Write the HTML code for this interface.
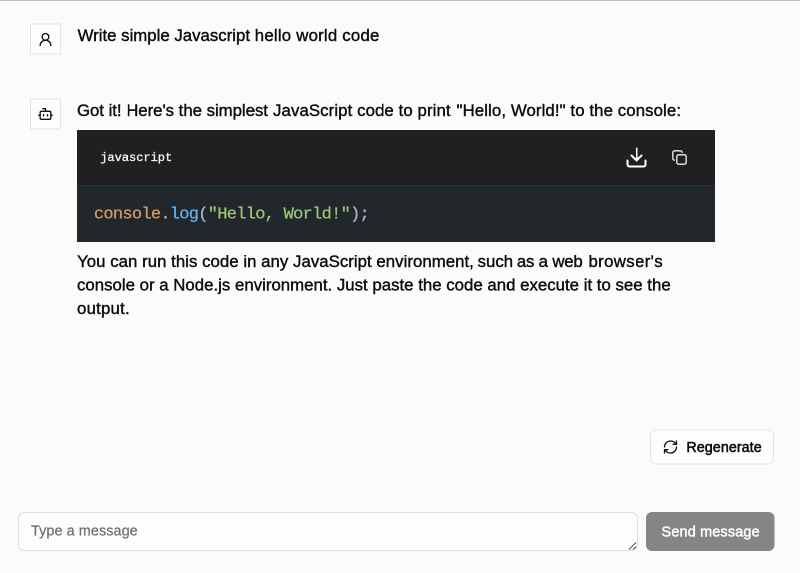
<!DOCTYPE html>
<html><head><meta charset="utf-8">
<style>
*{box-sizing:border-box;margin:0;padding:0}
html,body{width:800px;height:573px;overflow:hidden;background:#fbfbfb}
#w{position:absolute;left:0;top:0;width:1600px;height:1146px;transform:scale(.5);transform-origin:0 0;will-change:transform;background:#fbfbfb;overflow:hidden}
#z{position:absolute;left:0;top:0;width:800px;height:573px;zoom:2;font-family:"Liberation Sans",sans-serif;color:#111}
.topline{position:absolute;left:0;top:0;width:800px;height:1px;background:#c3c3c6}
.av{position:absolute;left:30px;width:31px;height:31px;border:1px solid #e3e3e6;background:#fdfdfd}
svg{position:absolute;overflow:visible;fill:none;stroke-linecap:round;stroke-linejoin:round;stroke-width:2}
.t{position:absolute;left:0;font-size:16.8px;line-height:24px;white-space:nowrap;color:#0c0c0c;-webkit-text-stroke:0.4px #0c0c0c}
.t span{position:absolute;top:0}
.code{position:absolute;left:77px;top:130px;width:638px;height:112px;background:#22272c}
.code .hd{position:absolute;left:0;top:0;width:638px;height:55px;background:#202022}
.code .sep{position:absolute;left:0;top:55px;width:638px;height:0.5px;background:#33383d}
.lang{position:absolute;left:23.2px;top:21px;font-family:"Liberation Mono",monospace;font-size:12px;line-height:14px;color:#f4f4f5;-webkit-text-stroke:0.3px #f4f4f5;white-space:pre}
.src{position:absolute;left:16.9px;top:73px;font-family:"Liberation Mono",monospace;font-size:17px;letter-spacing:-0.715px;line-height:22px;white-space:pre;-webkit-text-stroke:0.3px;text-shadow:0 1px rgba(0,0,0,.3)}
.regen{position:absolute;left:650px;top:429.5px;width:124px;height:35px;border:1px solid #e3e3e6;border-radius:6px;background:#fdfdfd}
.regen span{position:absolute;left:35.4px;top:7.5px;font-size:14.3px;letter-spacing:0.06px;line-height:18px;color:#0c0c0c;-webkit-text-stroke:0.55px #0c0c0c;white-space:nowrap}
.ta{position:absolute;left:18px;top:512px;width:620px;height:39px;border:1px solid #e0e0e3;border-radius:6px;background:#fdfdfd}
.ta span{position:absolute;left:12px;top:7.5px;font-size:14.4px;letter-spacing:0.08px;line-height:20px;color:#6c6c71;-webkit-text-stroke:0.2px #6c6c71;white-space:nowrap}
.send{position:absolute;left:645.75px;top:512px;width:128.5px;height:39px;border-radius:6px;background:#858587}
.send span{position:absolute;left:15.8px;top:9.5px;font-size:14.4px;letter-spacing:0.18px;line-height:20px;color:#fafafa;-webkit-text-stroke:0.55px #fafafa;white-space:nowrap}
</style></head><body>
<div id="w"><div id="z">
<div class="topline"></div>
<div class="av" style="top:23.5px"></div>
<svg style="left:37.3px;top:31.4px;stroke:#111" width="16" height="16" viewBox="0 0 24 24"><circle cx="12" cy="8" r="5"/><path d="M20 21a8 8 0 0 0-16 0"/></svg>
<div class="t" id="u" style="top:23.5px"><span style="left:77.59px;letter-spacing:0.008px">Write simple Javascript</span><span style="left:254.8px;letter-spacing:0.216px">hello world code</span></div>
<div class="av" style="top:98.5px"></div>
<svg style="left:37.3px;top:106.2px;stroke:#111" width="16" height="16" viewBox="0 0 24 24"><path d="M12 8V4H8"/><rect width="16" height="12" x="4" y="8" rx="2"/><path d="M2 14h2"/><path d="M20 14h2"/><path d="M15 13v2"/><path d="M9 13v2"/></svg>
<div class="t" id="b" style="top:98.5px"><span style="left:76.95px;letter-spacing:-0.025px">Got it! Here's the simplest</span><span style="left:273.06px;letter-spacing:0.09px">JavaScript code to print</span><span style="left:456.53px;letter-spacing:0.096px">"Hello, World!" to the console:</span></div>
<div class="code"><div class="hd"></div><div class="sep"></div><div class="lang">javascript</div>
<svg style="left:547.3px;top:15.7px;stroke:#fff" width="24" height="24" viewBox="0 0 24 24"><path d="M21 15v4a2 2 0 0 1-2 2H5a2 2 0 0 1-2-2v-4"/><polyline points="7 10 12 15 17 10"/><line x1="12" x2="12" y1="15" y2="3"/></svg>
<svg style="left:594.6px;top:19.7px;stroke:#efeff1" width="16" height="16" viewBox="0 0 24 24"><rect width="14" height="14" x="8" y="8" rx="2.4" ry="2.4"/><path d="M4.4 16a2.4 2.4 0 0 1-2.4-2.4V4.4a2.4 2.4 0 0 1 2.4-2.4h9.2a2.4 2.4 0 0 1 2.4 2.4"/></svg>
<div class="src"><span style="color:#d19a66">console</span><span style="color:#abb2bf">.</span><span style="color:#61afef">log</span><span style="color:#abb2bf">(</span><span style="color:#98c379">"Hello, World!"</span><span style="color:#abb2bf">);</span></div></div>
<div class="t" id="A" style="top:249.5px"><span style="left:77.11px;letter-spacing:0.032px">You can run this code in any JavaScript environment,</span><span style="left:477.61px;letter-spacing:-0.001px">such</span><span style="left:516.83px;letter-spacing:-0.18px">as a web</span><span style="left:588.49px;letter-spacing:0.353px">browser's</span></div>
<div class="t" id="B" style="top:273.0px"><span style="left:77.0px;letter-spacing:0.013px">console or a Node.js environment. Just paste the code and execute it to see the</span></div>
<div class="t" id="C" style="top:296.5px"><span style="left:77.05px;letter-spacing:0.207px">output.</span></div>
<div class="regen"><svg style="left:11.5px;top:8.3px;stroke:#111" width="16" height="16" viewBox="0 0 24 24"><path d="M3 12a9 9 0 0 1 9-9 9.75 9.75 0 0 1 6.74 2.74L21 8"/><path d="M21 3v5h-5"/><path d="M21 12a9 9 0 0 1-9 9 9.75 9.75 0 0 1-6.74-2.74L3 16"/><path d="M8 16H3v5"/></svg><span>Regenerate</span></div>
<div class="ta"><span>Type a message</span>
<svg style="left:608.9px;top:27.6px;stroke:#555;stroke-width:1" width="10" height="10" viewBox="0 0 10 10"><path d="M1 9L8.2 1.8M5 9L8.2 5.8" stroke-linecap="butt"/></svg></div>
<div class="send"><span>Send message</span></div>
</div></div>
</body></html>
